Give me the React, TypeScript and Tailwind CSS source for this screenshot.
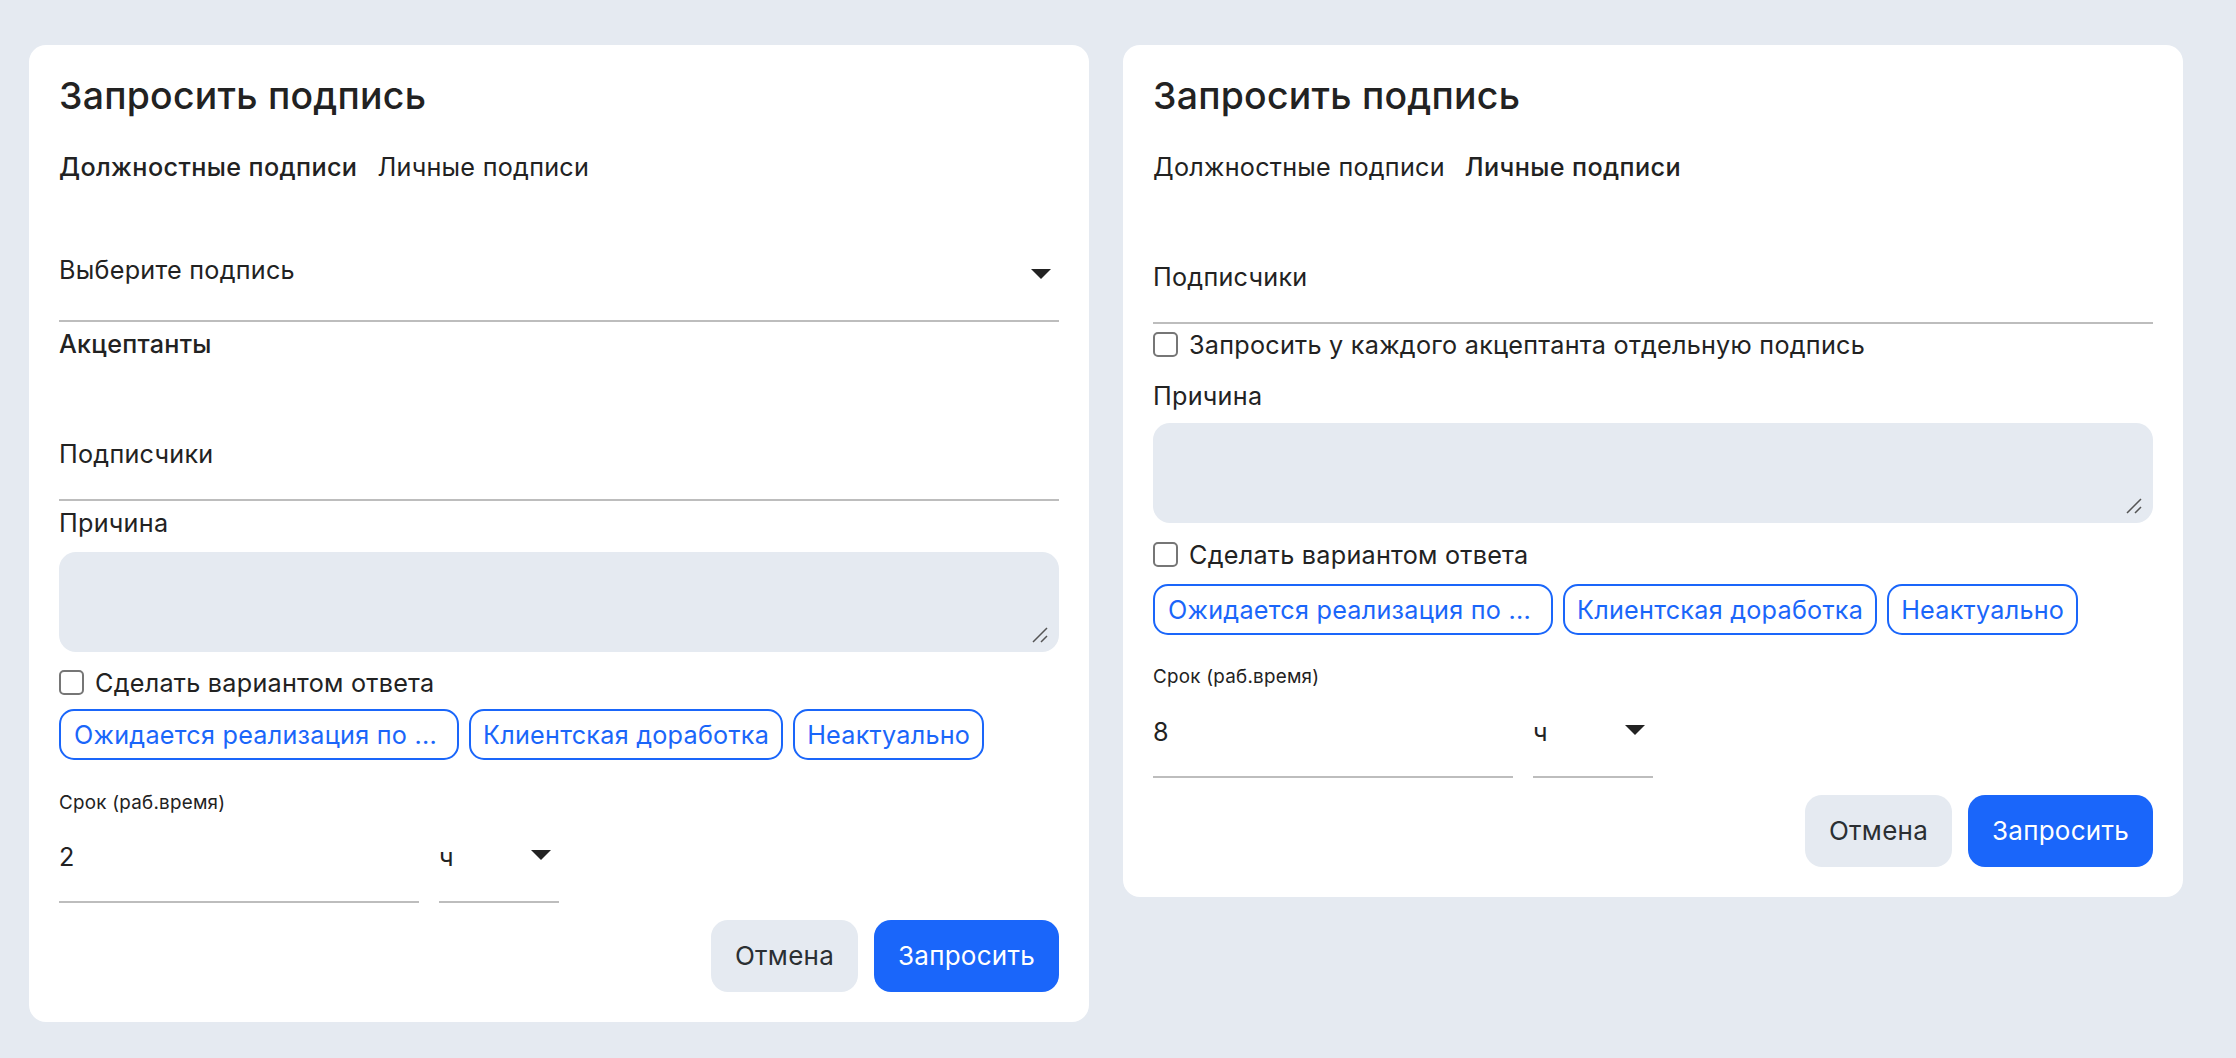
const chips = ["Ожидается реализация по ...", "Клиентская доработка", "Неактуально"];

function Caret({ className = "" }: { className?: string }) {
  return (
    <svg width="20" height="10" viewBox="0 0 20 10" className={className}>
      <path d="M0 0h20L10 10z" fill="#222222" />
    </svg>
  );
}

function Check({ label }: { label: string }) {
  return (
    <label className="flex h-[30px] items-center gap-[11px]">
      <input
        type="checkbox"
        className="size-[25px] appearance-none rounded-[5px] border-2 border-[#767676] bg-white"
      />
      <span className="pt-[2px]">{label}</span>
    </label>
  );
}

function Field({ label, className }: { label: string; className: string }) {
  return (
    <div className={`flex h-[92px] items-center border-b-2 border-[#bdbdbd] ${className}`}>
      {label}
    </div>
  );
}

function Reason({ className }: { className: string }) {
  return (
    <div className={`relative h-[100px] ${className}`}>
      <textarea className="block h-full w-full resize-none rounded-[17px] bg-[#e5eaf1] px-3 py-2 outline-none" />
      <svg width="16" height="16" viewBox="0 0 16 16" className="absolute bottom-[9px] right-[11px]">
        <path d="M1 15 15 1M9 15l6-6" stroke="#555555" strokeWidth="1.5" fill="none" />
      </svg>
    </div>
  );
}

function Footer({ value, labelClass }: { value: string; labelClass: string }) {
  return (
    <>
      <div className={`flex items-center text-[18.8px] leading-none ${labelClass}`}>
        Срок (раб.время)
      </div>
      <div className="flex gap-5">
        <div className="flex h-[90px] w-[360px] items-center border-b-2 border-[#bdbdbd]">
          {value}
        </div>
        <div className="relative flex h-[90px] w-[120px] items-center border-b-2 border-[#bdbdbd]">
          <span>ч</span>
          <Caret className="absolute right-2 top-[37px]" />
        </div>
      </div>
      <div className="mt-[17px] flex justify-end gap-4 text-[26px]">
        <button className="h-[72px] w-[147px] rounded-[17px] bg-[#e5eaf1] text-[#2b2f33]">Отмена</button>
        <button className="h-[72px] w-[185px] rounded-[17px] bg-[#1a66fa] text-white">Запросить</button>
      </div>
    </>
  );
}

function Chips({ className }: { className: string }) {
  return (
    <div className={`flex gap-[10px] ${className}`}>
      {chips.map((c, i) => (
        <button
          key={c}
          className={`h-[51px] whitespace-nowrap rounded-[15px] border-2 border-[#1a66fa] text-[#1a66fa] ${
            i === 0 ? "w-[400px] px-[13px] text-left" : "px-[12px]"
          }`}
        >
          {c}
        </button>
      ))}
    </div>
  );
}

function Head({ active }: { active: 0 | 1 }) {
  return (
    <>
      <h1 className="h-[46px] text-[37.4px] font-[450] leading-[42px]">Запросить подпись</h1>
      <div className="mt-[31px] flex h-[30px] items-center gap-5">
        <span className={active === 0 ? "font-medium tracking-[0.015em]" : ""}>Должностные подписи</span>
        <span className={active === 1 ? "font-medium tracking-[0.015em]" : ""}>Личные подписи</span>
      </div>
    </>
  );
}

export default function App() {
  return (
    <div className="flex min-h-screen items-start gap-[34px] bg-[#e5eaf1] pl-[29px] pt-[45px] font-['Inter',sans-serif] text-[25.2px] leading-[30px] tracking-[0.01em] text-[#222222]">
      <div className="w-[1060px] rounded-[17px] bg-white px-[30px] pb-[30px] pt-[30px]">
        <Head active={0} />
        <div className="mt-[38px] flex h-[102px] items-center justify-between border-b-2 border-[#bdbdbd]">
          <span>Выберите подпись</span>
          <Caret className="mr-[8px] mt-[8px]" />
        </div>
        <div className="mt-[7px] h-[30px] font-medium">Акцептанты</div>
        <Field label="Подписчики" className="mt-[50px]" />
        <div className="mt-[7px] h-[30px]">Причина</div>
        <Reason className="mt-[14px]" />
        <div className="mt-[15px]">
          <Check label="Сделать вариантом ответа" />
        </div>
        <Chips className="mt-[12px]" />
        <Footer value="2" labelClass="mt-[33px] h-[20px]" />
      </div>
      <div className="w-[1060px] rounded-[17px] bg-white px-[30px] pb-[30px] pt-[30px]">
        <Head active={1} />
        <Field label="Подписчики" className="mt-[50px]" />
        <div className="mt-[5px]">
          <Check label="Запросить у каждого акцептанта отдельную подпись" />
        </div>
        <div className="mt-[22px] h-[30px]">Причина</div>
        <Reason className="mt-[12px]" />
        <div className="mt-[16px]">
          <Check label="Сделать вариантом ответа" />
        </div>
        <Chips className="mt-[15px]" />
        <Footer value="8" labelClass="mt-[31px] h-[22px]" />
      </div>
    </div>
  );
}
